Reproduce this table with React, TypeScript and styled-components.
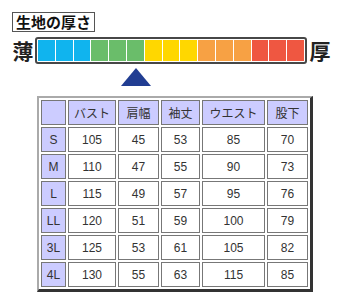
import React from 'react';
import styled, { createGlobalStyle } from 'styled-components';

const GlobalStyle = createGlobalStyle`
  body {
    margin: 0;
    background: #ffffff;
    font-family: "Liberation Sans", "Noto Sans CJK JP", sans-serif;
  }
`;

const PageContainer = styled.div`
  display: flex;
  flex-direction: column;
  align-items: flex-start;
  width: 340px;
  height: 296px;
  padding-top: 12px;
  box-sizing: border-box;
  background: #ffffff;
`;

const ThicknessLabel = styled.div`
  margin-left: 12px;
  height: 20px;
  padding: 0 3px;
  box-sizing: border-box;
  border: 1px solid #555;
  font-family: "Noto Sans CJK JP", sans-serif;
  font-size: 15px;
  font-weight: bold;
  line-height: 18px;
  color: #111;
`;

const GaugeRow = styled.div`
  display: flex;
  align-items: center;
  margin-top: 5px;
  padding-left: 12px;
  height: 27px;
`;

const EndLabel = styled.div<{ $start?: boolean }>`
  width: 22px;
  margin-right: ${(p) => (p.$start ? '1px' : '0')};
  font-family: "Noto Sans CJK JP", sans-serif;
  font-size: 21px;
  font-weight: bold;
  line-height: 27px;
  color: #222;
  text-align: center;
`;

const GaugeBar = styled.div`
  display: flex;
  gap: 1px;
  width: 272px;
  height: 27px;
  margin-right: 2px;
  padding: 1px;
  box-sizing: border-box;
  border: 2px solid #474747;
  border-radius: 3px;
  background: #ffffff;
`;

const GaugeCell = styled.div<{ $color: string }>`
  flex: 1;
  background: ${(p) => p.$color};
`;

const Pointer = styled.div`
  width: 0;
  height: 0;
  margin: 4px 0 0 121px;
  border-left: 15px solid transparent;
  border-right: 15px solid transparent;
  border-bottom: 18px solid #213d92;
`;

const SizeTable = styled.div`
  display: grid;
  grid-template-columns: 25px 48px 41px 39px 63px 41px;
  grid-auto-rows: 25px;
  gap: 2px;
  margin: 10px 0 0 37px;
  padding: 2px;
  border-top: 2px solid #aaaaaa;
  border-left: 2px solid #aaaaaa;
  border-right: 3px solid #333333;
  border-bottom: 3px solid #333333;
`;

const Cell = styled.div<{ $head?: boolean }>`
  display: flex;
  align-items: center;
  justify-content: center;
  box-sizing: border-box;
  border: 1px solid #777;
  background: ${(p) => (p.$head ? '#ccccff' : '#ffffff')};
  font-size: 12px;
  color: #333;
  white-space: nowrap;
`;

// five thickness bands, three steps each
const gaugeColors = [
  '#10b4ee', '#10b4ee', '#10b4ee',
  '#6abd6a', '#6abd6a', '#6abd6a',
  '#ffd700', '#ffd700', '#ffd700',
  '#f7a144', '#f7a144', '#f7a144',
  '#ef5741', '#ef5741', '#ef5741',
];

const headers = ['', 'バスト', '肩幅', '袖丈', 'ウエスト', '股下'];

const rows: [string, number, number, number, number, number][] = [
  ['S', 105, 45, 53, 85, 70],
  ['M', 110, 47, 55, 90, 73],
  ['L', 115, 49, 57, 95, 76],
  ['LL', 120, 51, 59, 100, 79],
  ['3L', 125, 53, 61, 105, 82],
  ['4L', 130, 55, 63, 115, 85],
];

export default function App() {
  return (
    <PageContainer>
      <GlobalStyle />
      <ThicknessLabel>生地の厚さ</ThicknessLabel>
      <GaugeRow>
        <EndLabel $start>薄</EndLabel>
        <GaugeBar>
          {gaugeColors.map((c, i) => (
            <GaugeCell key={i} $color={c} />
          ))}
        </GaugeBar>
        <EndLabel>厚</EndLabel>
      </GaugeRow>
      <Pointer />
      <SizeTable>
        {headers.map((h, i) => (
          <Cell key={'h' + i} $head>
            {h}
          </Cell>
        ))}
        {rows.map((r) =>
          r.map((v, i) => (
            <Cell key={r[0] + i} $head={i === 0}>
              {v}
            </Cell>
          ))
        )}
      </SizeTable>
    </PageContainer>
  );
}
